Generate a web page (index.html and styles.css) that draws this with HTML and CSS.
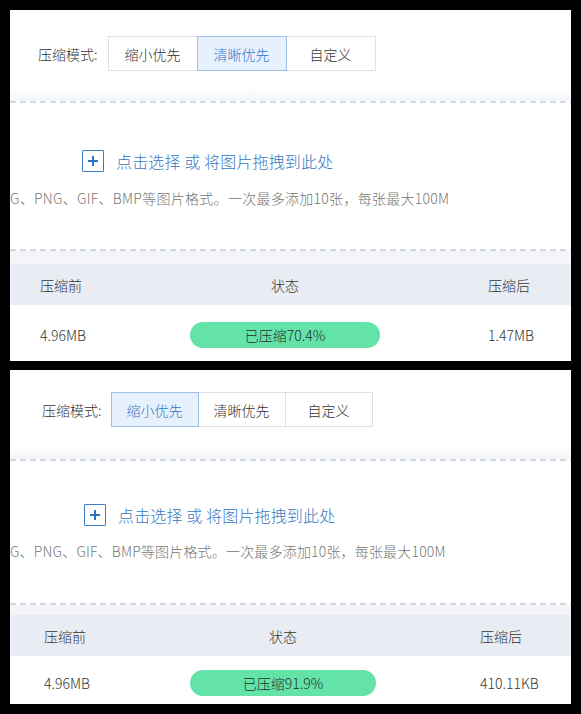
FILE: index.html
```html
<!DOCTYPE html>
<html lang="zh-CN">
<head>
    <meta charset="UTF-8">
    <meta name="viewport" content="width=device-width, initial-scale=1.0">
    <title>图片压缩</title>
    <link rel="stylesheet" href="styles.css">
</head>
<body>
    <div class="shot shot-a">
        <div class="mode">
            <span class="mode-label">压缩模式:</span>
            <div class="mode-group">
                <button class="mode-btn">缩小优先</button>
                <button class="mode-btn active">清晰优先</button>
                <button class="mode-btn">自定义</button>
            </div>
        </div>
        <div class="band"></div>
        <div class="dash"></div>
        <div class="upload">
            <div class="pick">
                <span class="plus-box">
                    <svg width="12" height="12" viewBox="0 0 12 12"><path d="M6 1v10M1 6h10" stroke="#2f73bd" stroke-width="2"/></svg>
                </span>
                <span class="pick-text">点击选择 或 将图片拖拽到此处</span>
            </div>
            <p class="hint">G、PNG、GIF、BMP等图片格式。一次最多添加10张，每张最大100M</p>
        </div>
        <div class="dash"></div>
        <div class="gap-band"></div>
        <div class="table">
            <div class="row head">
                <div class="cell">压缩前</div>
                <div class="cell center">状态</div>
                <div class="cell last">压缩后</div>
            </div>
            <div class="row body">
                <div class="cell">4.96MB</div>
                <div class="cell center"><span class="pill">已压缩70.4%</span></div>
                <div class="cell last">1.47MB</div>
            </div>
        </div>
    </div>

    <div class="shot shot-b">
        <div class="mode">
            <span class="mode-label">压缩模式:</span>
            <div class="mode-group">
                <button class="mode-btn active">缩小优先</button>
                <button class="mode-btn">清晰优先</button>
                <button class="mode-btn">自定义</button>
            </div>
        </div>
        <div class="band"></div>
        <div class="dash"></div>
        <div class="upload">
            <div class="pick">
                <span class="plus-box">
                    <svg width="12" height="12" viewBox="0 0 12 12"><path d="M6 1v10M1 6h10" stroke="#2f73bd" stroke-width="2"/></svg>
                </span>
                <span class="pick-text">点击选择 或 将图片拖拽到此处</span>
            </div>
            <p class="hint">G、PNG、GIF、BMP等图片格式。一次最多添加10张，每张最大100M</p>
        </div>
        <div class="dash"></div>
        <div class="gap-band"></div>
        <div class="table">
            <div class="row head">
                <div class="cell">压缩前</div>
                <div class="cell center">状态</div>
                <div class="cell last">压缩后</div>
            </div>
            <div class="row body">
                <div class="cell">4.96MB</div>
                <div class="cell center"><span class="pill">已压缩91.9%</span></div>
                <div class="cell last">410.11KB</div>
            </div>
        </div>
    </div>
</body>
</html>
```

FILE: styles.css
```css
body {
    margin: 0;
    width: 581px;
    height: 714px;
    background-color: #000;
    font-family: "Noto Sans CJK SC", "Noto Sans", sans-serif;
    font-weight: 300;
    color: #333;
    overflow: hidden;
}

.shot {
    margin: 10px 10px 0;
    width: 561px;
    background-color: #fff;
    overflow: hidden;
}

.shot-a {
    height: 351px;
}

.shot-b {
    margin-top: 9px;
    height: 334px;
}

/* mode switch */
.mode {
    display: flex;
    align-items: center;
    padding: 26px 0 0 28px;
}

.shot-b .mode {
    padding: 22px 0 0 32px;
}

.mode-label {
    font-size: 14px;
    margin-right: 10px;
    white-space: nowrap;
}

.shot-b .mode-label {
    margin-right: 9px;
}

.mode-group {
    display: flex;
}

.mode-btn {
    width: 90px;
    height: 35px;
    margin-left: -1px;
    padding: 0;
    border: 1px solid #dde1e7;
    background-color: #fff;
    color: #333;
    font-family: inherit;
    font-weight: 300;
    font-size: 14px;
}

.mode-btn:first-child {
    margin-left: 0;
}

.shot-b .mode-btn {
    width: 88px;
}

.mode-btn.active {
    position: relative;
    background-color: #e7f1fd;
    border-color: #9dc0e8;
    color: #2f78c8;
}

.band {
    height: 13px;
    margin-top: 17px;
    background: linear-gradient(#fff, #f1f4f8);
}

.shot-b .band {
    margin-top: 19px;
}

.dash {
    height: 2px;
    background: repeating-linear-gradient(90deg, #d2d8df 0 6px, transparent 6px 10px);
}

/* upload area */
.upload {
    height: 146px;
    padding-top: 47px;
    box-sizing: border-box;
}

.shot-b .upload {
    height: 142px;
    padding-top: 43px;
}

.pick {
    display: flex;
    align-items: center;
    height: 22px;
    padding-left: 72px;
}

.shot-b .pick {
    padding-left: 74px;
}

.plus-box {
    display: flex;
    align-items: center;
    justify-content: center;
    width: 20px;
    height: 20px;
    border: 1px solid #3b7cc2;
    border-radius: 1px;
}

.pick-text {
    margin-left: 12px;
    font-size: 16px;
    color: #3577bf;
    white-space: nowrap;
    letter-spacing: 0.15px;
}

.hint {
    margin: 16px 0 0;
    font-size: 14px;
    line-height: 20px;
    color: #777;
    white-space: nowrap;
    letter-spacing: 0.28px;
}

.shot-b .hint {
    margin-top: 15px;
    letter-spacing: 0.18px;
}

.gap-band {
    height: 13px;
    background-color: #f3f5f8;
}

.shot-b .gap-band {
    height: 10px;
}

/* result table */
.row {
    display: grid;
    grid-template-columns: 150px 190px 1fr;
    align-items: center;
    padding-left: 30px;
    font-size: 14px;
}

.shot-b .row {
    grid-template-columns: 146px 186px 1fr;
    padding-left: 34px;
}

.row.head {
    height: 41px;
    background-color: #e9ecf2;
}

.row.body {
    height: 56px;
    padding-top: 4px;
    box-sizing: border-box;
}

.shot-b .row.body {
    height: 50px;
}

.cell.center {
    text-align: center;
}

.cell.last {
    padding-left: 108px;
}

.shot-b .cell.last {
    padding-left: 104px;
}

.pill {
    display: block;
    height: 26px;
    line-height: 26px;
    border-radius: 13px;
    background-color: #64e3a9;
    color: #1f2f28;
}
```
